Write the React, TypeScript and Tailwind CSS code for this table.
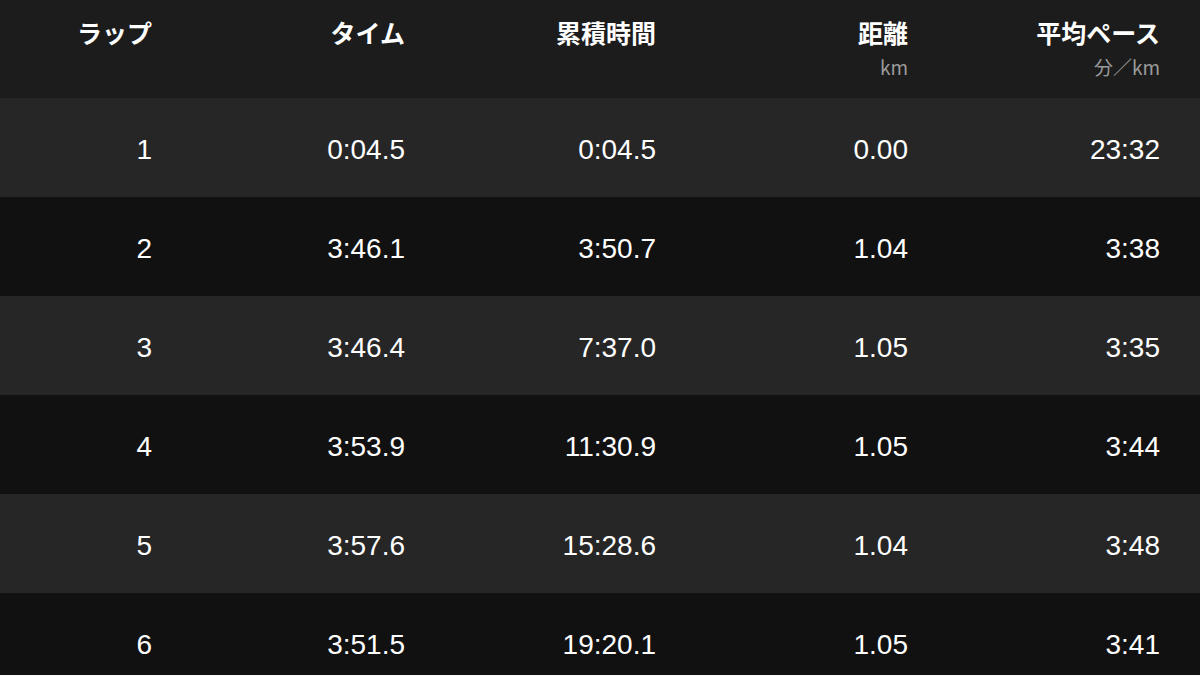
const laps = [
  { lap: '1', time: '0:04.5', total: '0:04.5', dist: '0.00', pace: '23:32' },
  { lap: '2', time: '3:46.1', total: '3:50.7', dist: '1.04', pace: '3:38' },
  { lap: '3', time: '3:46.4', total: '7:37.0', dist: '1.05', pace: '3:35' },
  { lap: '4', time: '3:53.9', total: '11:30.9', dist: '1.05', pace: '3:44' },
  { lap: '5', time: '3:57.6', total: '15:28.6', dist: '1.04', pace: '3:48' },
  { lap: '6', time: '3:51.5', total: '19:20.1', dist: '1.05', pace: '3:41' },
]

const cols = 'grid grid-cols-[152px_253px_251px_252px_252px] pr-[40px]'

function HeadCell({ label, unit }: { label: string; unit?: string }) {
  return (
    <div className="flex flex-col items-end">
      <span className="text-[25px] leading-none font-bold text-white">{label}</span>
      {unit && <span className="mt-[12px] text-[19px] leading-none text-[#9a9a9a]">{unit}</span>}
    </div>
  )
}

export default function App() {
  return (
    <div
      className="w-[1200px] h-[675px] overflow-hidden bg-[#111111]"
      style={{ fontFamily: '"Liberation Sans", "Noto Sans CJK JP", sans-serif' }}
    >
      {/* Header */}
      <div
        className={`${cols} h-[98px] bg-[#1c1c1c] pt-[20px]`}
        style={{ fontFamily: '"Noto Sans CJK JP", sans-serif' }}
      >
        <HeadCell label="ラップ" />
        <HeadCell label="タイム" />
        <HeadCell label="累積時間" />
        <HeadCell label="距離" unit="km" />
        <HeadCell label="平均ペース" unit="分／km" />
      </div>

      {/* Rows */}
      {laps.map((row, i) => (
        <div
          key={row.lap}
          className={`${cols} h-[99px] items-center text-[28px] text-white ${i % 2 === 0 ? 'bg-[#262626]' : 'bg-[#111111]'}`}
        >
          <div className="text-right pt-[4px]">{row.lap}</div>
          <div className="text-right pt-[4px]">{row.time}</div>
          <div className="text-right pt-[4px]">{row.total}</div>
          <div className="text-right pt-[4px]">{row.dist}</div>
          <div className="text-right pt-[4px]">{row.pace}</div>
        </div>
      ))}
    </div>
  )
}
